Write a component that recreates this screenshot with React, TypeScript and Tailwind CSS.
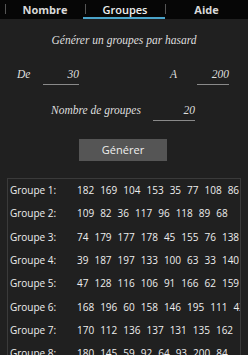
import React from 'react'

const groups: number[][] = [
  [182, 169, 104, 153, 35, 77, 108, 86],
  [109, 82, 36, 117, 96, 118, 89, 68],
  [74, 179, 177, 178, 45, 155, 76, 138],
  [39, 187, 197, 133, 100, 63, 33, 140],
  [47, 128, 116, 106, 91, 166, 62, 159],
  [168, 196, 60, 158, 146, 195, 111, 43],
  [170, 112, 136, 137, 131, 135, 162],
  [180, 145, 59, 92, 64, 93, 200, 84],
]

const hand = { fontFamily: '"Liberation Serif", serif' }

function Tab({ label, active, bold, w }: { label: string; active?: boolean; bold?: boolean; w: string }) {
  return (
    <div className={`relative h-full flex items-center justify-center ${w}`}>
      <div className="absolute left-0 top-[4px] h-[10px] w-px bg-[#555]" />
      <span className={`text-[11px] leading-none ${bold ? 'font-bold text-[#d8d8d8]' : 'font-semibold text-[#eeeeee]'}`}>
        {label}
      </span>
      {active && <div className="absolute left-[-2px] right-0 bottom-0 h-[2px] bg-[#4aa3c9]" />}
    </div>
  )
}

function Field({ value, w }: { value: string; w: string }) {
  return (
    <div className={`${w} h-[20px] border-b border-[#8a8a8a] flex items-center justify-end text-[11.5px] italic text-[#dedede]`} style={hand}>
      {value}
    </div>
  )
}

export default function App() {
  return (
    <div className="w-[248px] h-[355px] overflow-hidden bg-[#202020]" style={{ fontFamily: '"Open Sans", "Noto Sans", sans-serif' }}>
      <div className="h-[19px] bg-[#060606] flex pl-[5px]">
        <Tab label="Nombre" bold w="w-[80px]" />
        <Tab label="Groupes" active w="w-[80px]" />
        <Tab label="Aide" bold w="w-[83px]" />
      </div>

      <div className="mt-[15px] h-[14px] flex items-center justify-center text-[11.5px] italic text-[#dedede]" style={hand}>
        Générer un groupes par hasard
      </div>

      <div className="mt-[17px] flex items-center text-[11.5px] italic text-[#dedede]" style={hand}>
        <div className="w-[43px] pl-[17px]">De</div>
        <Field value="30" w="w-[36px]" />
        <div className="w-[91px]" />
        <div className="w-[27px]">A</div>
        <Field value="200" w="w-[32px]" />
      </div>

      <div className="mt-[16px] flex items-center text-[11.5px] italic text-[#dedede]" style={hand}>
        <div className="w-[153px] pl-[51px]">Nombre de groupes</div>
        <Field value="20" w="w-[42px]" />
      </div>

      <div className="mt-[18px] flex justify-center">
        <div className="ml-[-2px] w-[88px] h-[22px] bg-[#555555] flex items-center justify-center text-[11px] text-[#f0f0f0]">
          Générer
        </div>
      </div>

      <div className="mt-[17px] ml-[7px] w-[234px] h-[200px] border border-[#3a3a3a] overflow-hidden">
        {groups.map((g, i) => (
          <div key={i} className="h-[23.3px] flex items-center text-[10px] text-[#eeeeee] whitespace-nowrap">
            <div className="w-[69px] shrink-0 pl-[2px]">Groupe {i + 1}:</div>
            <div className="flex gap-[6px]">
              {g.map((n, j) => (
                <span key={j}>{n}</span>
              ))}
            </div>
          </div>
        ))}
      </div>
    </div>
  )
}
